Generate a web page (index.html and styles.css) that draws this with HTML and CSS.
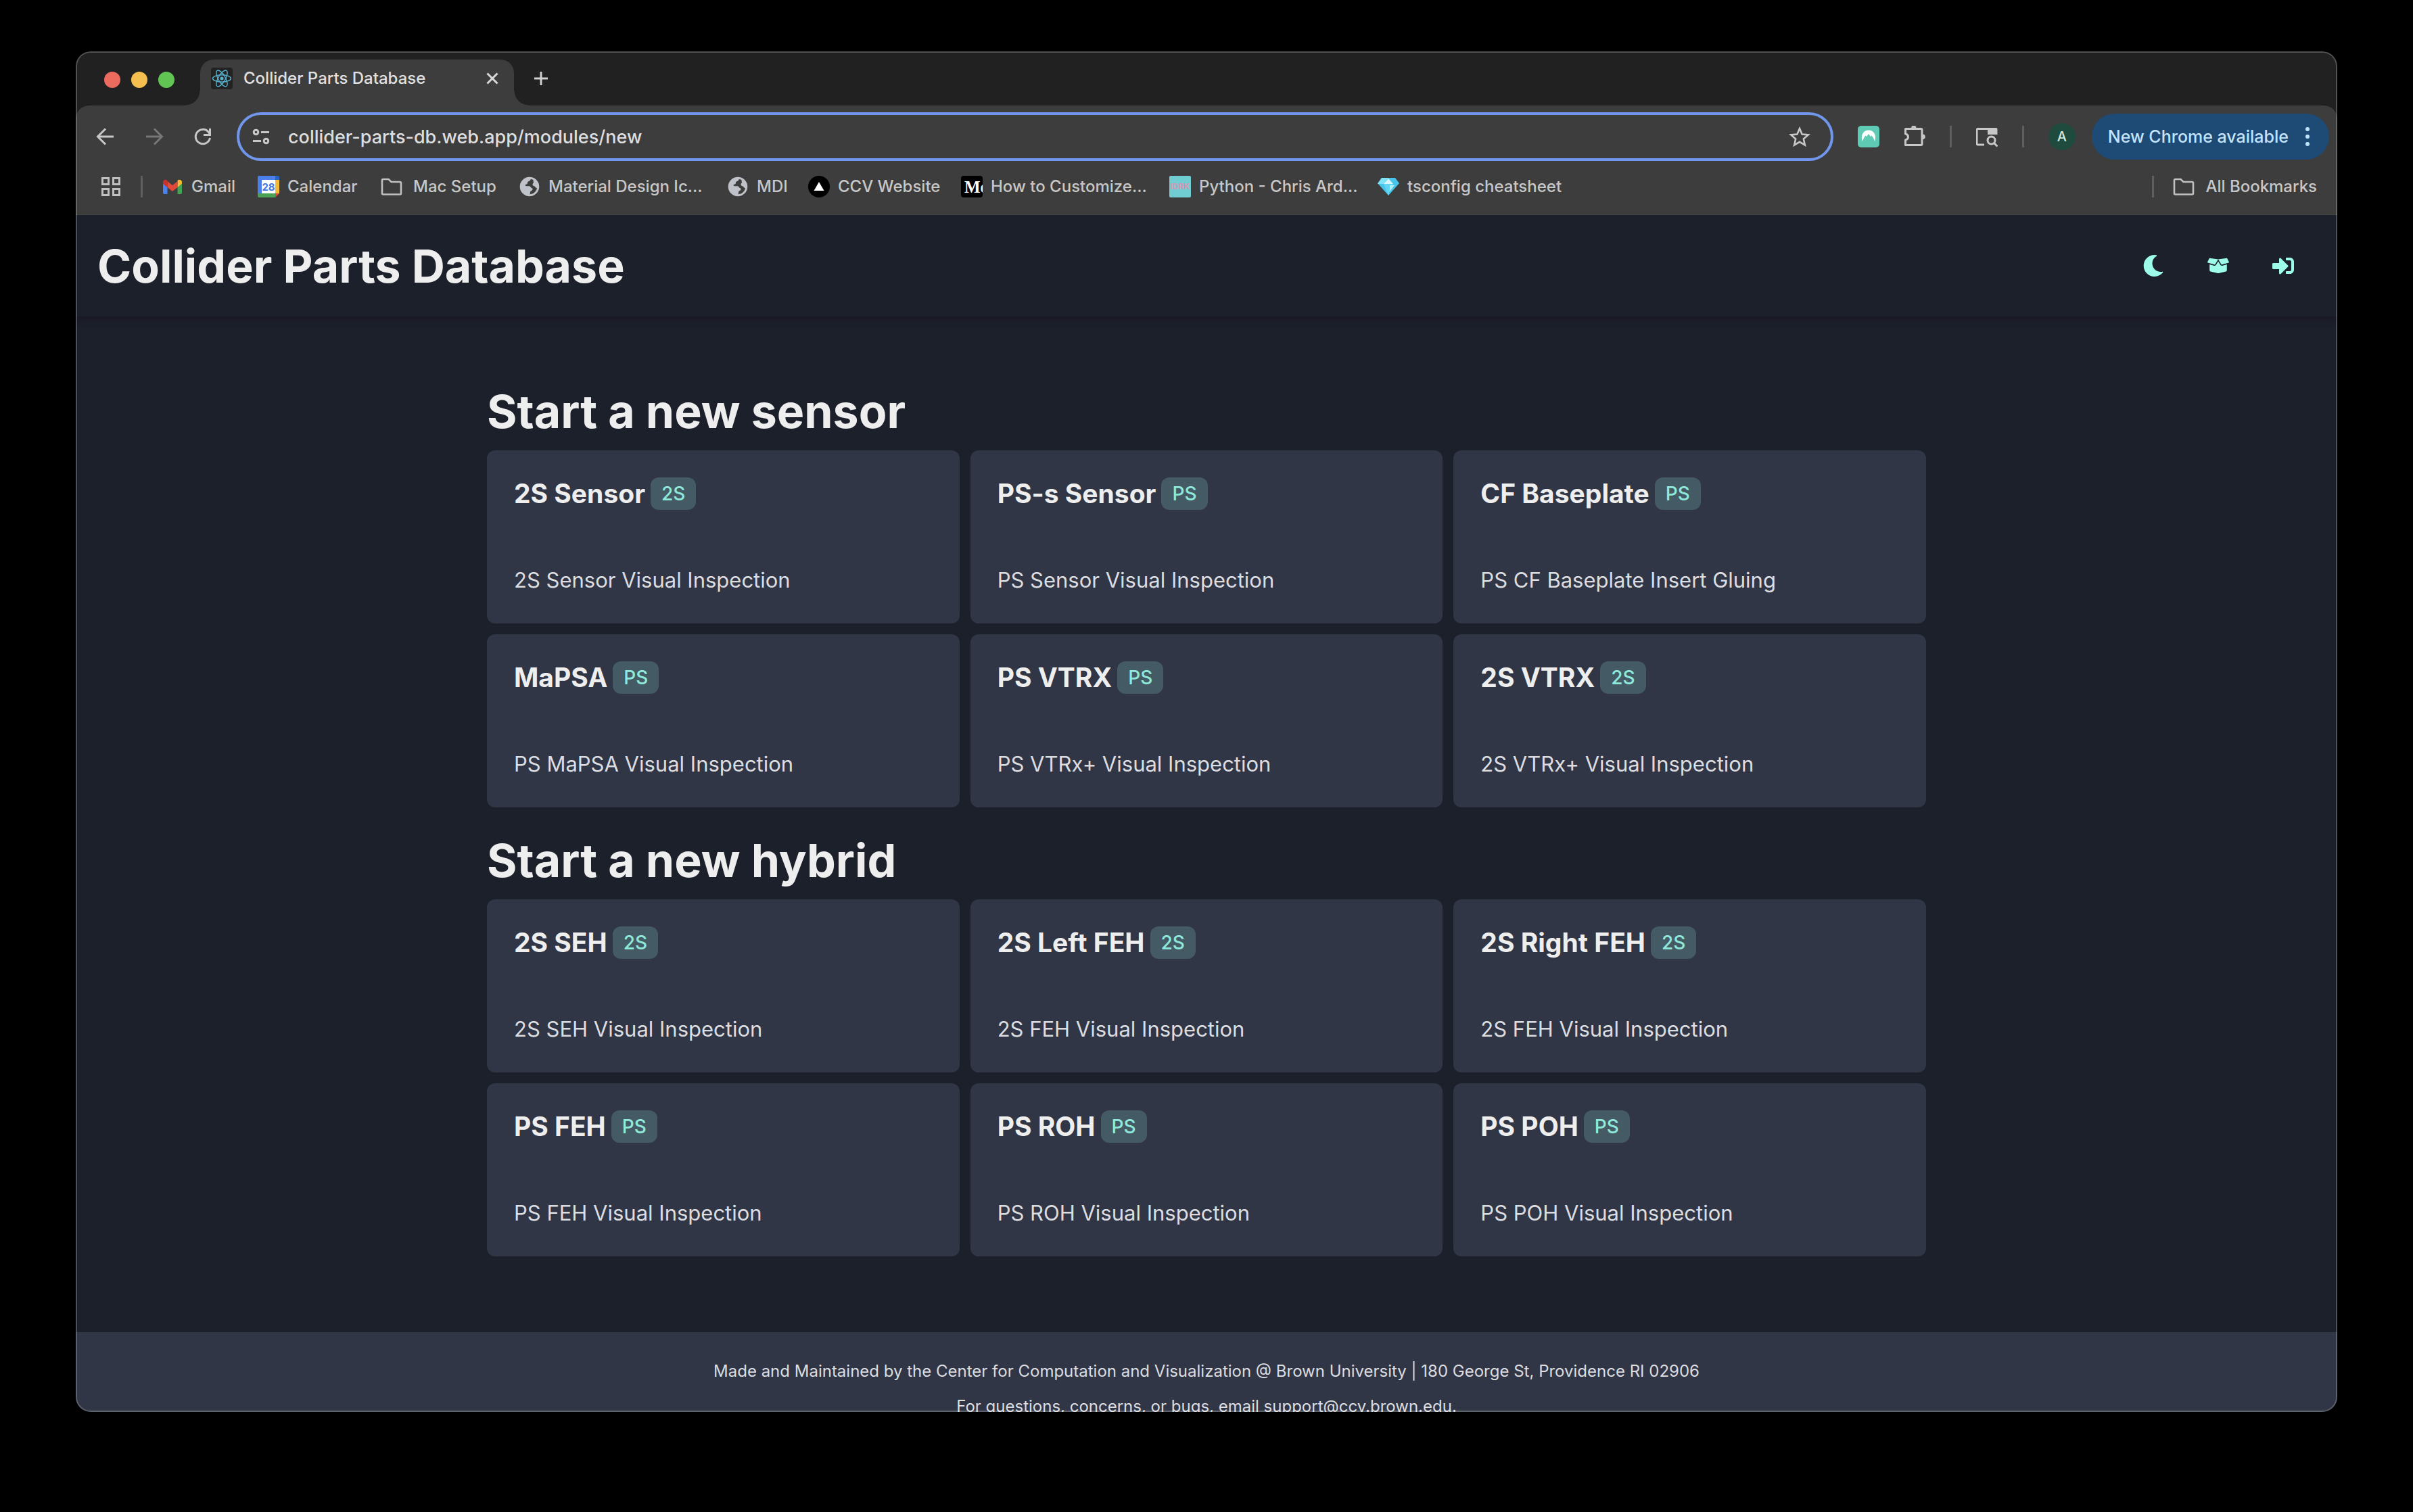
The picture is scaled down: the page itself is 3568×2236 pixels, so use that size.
FILE: index.html
```html
<!DOCTYPE html>
<html lang="en">
<head>
<meta charset="utf-8">
<meta name="viewport" content="width=device-width, initial-scale=1">
<title>Collider Parts Database</title>
<link rel="stylesheet" href="styles.css">
</head>
<body>
<div class="window">
  <div class="tab-strip">
    <div class="traffic-lights">
      <button class="light light-close" aria-label="Close window"></button>
      <button class="light light-minimize" aria-label="Minimize window"></button>
      <button class="light light-zoom" aria-label="Zoom window"></button>
    </div>
    <div class="tab">
      <svg class="icon" viewBox="0 0 32 32" aria-hidden="true">
        <rect width="32" height="32" rx="4" fill="#222222"/>
        <g fill="none" stroke="#57b3cf" stroke-width="1.4">
          <ellipse cx="16" cy="16" rx="13.5" ry="5.2"/>
          <ellipse cx="16" cy="16" rx="13.5" ry="5.2" transform="rotate(60 16 16)"/>
          <ellipse cx="16" cy="16" rx="13.5" ry="5.2" transform="rotate(120 16 16)"/>
        </g>
        <circle cx="16" cy="16" r="2.6" fill="#57b3cf"/>
      </svg>
      <span class="tab-title">Collider Parts Database</span>
      <button class="plain-button" aria-label="Close tab">
        <svg class="icon" viewBox="0 0 32 32" fill="none" stroke="#d8d8d8" stroke-width="3"><path d="M8.500 8.500l15 15M23.500 8.500l-15 15"/></svg>
      </button>
    </div>
    <button class="plain-button new-tab" aria-label="New tab">
      <svg class="icon" viewBox="0 0 32 32" fill="none" stroke="#d0d0d0" stroke-width="3"><path d="M16 6v20M6 16h20"/></svg>
    </button>
  </div>

  <div class="toolbar">
    <div class="nav-buttons">
      <button class="plain-button" aria-label="Back">
        <svg class="icon" viewBox="0 0 32 32" fill="none" stroke="#c7c7c7" stroke-width="3"><path d="M28 16H5M16 4.500L4.500 16 16 27.500"/></svg>
      </button>
      <button class="plain-button" aria-label="Forward">
        <svg class="icon" viewBox="0 0 32 32" fill="none" stroke="#777777" stroke-width="3"><path d="M4 16h23M16 4.500L27.500 16 16 27.500"/></svg>
      </button>
      <button class="plain-button" aria-label="Reload">
        <svg class="icon" viewBox="0 0 32 32" fill="none" stroke="#c7c7c7" stroke-width="3"><path d="M26.500 18A10.700 10.700 0 1 1 24 9l2 3"/><path d="M26.500 4v9.500H17"/></svg>
      </button>
    </div>
    <div class="address-bar">
      <svg class="icon" viewBox="0 0 32 32" fill="none" stroke="#c7c7c7" stroke-width="3" aria-hidden="true"><circle cx="8.500" cy="9.500" r="3.300"/><path d="M16 9.500h12M4 22.500h12"/><circle cx="23.500" cy="22.500" r="3.300"/></svg>
      <input class="address-input" type="text" aria-label="Address" value="collider-parts-db.web.app/modules/new">
      <button class="plain-button" aria-label="Bookmark this page">
        <svg class="icon" viewBox="0 0 32 32" fill="none" stroke="#c7c7c7" stroke-width="2.600"><path d="M16 4l3.600 8.600 9.200.8-7 6.100 2.100 9.100L16 23.800l-7.900 4.800 2.100-9.100-7-6.100 9.200-.8z"/></svg>
      </button>
    </div>
    <div class="extensions">
      <button class="plain-button" aria-label="NordVPN">
        <svg class="icon" viewBox="0 0 32 32"><rect width="32" height="32" rx="5" fill="#5fcbb5"/><path d="M7 23C3.500 14 8.500 6.500 16 6.500S28.500 14 25 23q-2-6-4.500-8.500L19 16l-3-4-3 4-1.500-1.500Q9 17 7 23z" fill="#fff"/></svg>
      </button>
      <button class="plain-button" aria-label="Extensions">
        <svg class="icon" viewBox="0 0 32 32"><path d="M2.500 4.500h23a1.500 1.500 0 0 1 1.500 1.500v21a1.500 1.500 0 0 1-1.500 1.500h-23V21q4-1 4-4.500t-4-4.500z" fill="none" stroke="#c7c7c7" stroke-width="3" stroke-linejoin="round"/><path d="M11 3.500a3.800 3.800 0 0 1 7.600 0zM28 12.500a3.800 3.800 0 0 1 0 7.600z" fill="#c7c7c7"/></svg>
      </button>
      <span class="divider"></span>
      <button class="plain-button" aria-label="Search tabs">
        <svg class="icon" viewBox="0 0 32 32"><path d="M12 28H2.500A1.500 1.500 0 0 1 1 26.500V6a1.500 1.500 0 0 1 1.500-1.500H26" fill="none" stroke="#c7c7c7" stroke-width="3"/><path d="M17 3h12.500a2 2 0 0 1 2 2v8H17z" fill="#c7c7c7"/><circle cx="22.500" cy="21.500" r="5.500" fill="none" stroke="#c7c7c7" stroke-width="3"/><path d="M26.500 25.500l5 5" stroke="#c7c7c7" stroke-width="3"/></svg>
      </button>
      <span class="divider"></span>
      <button class="avatar">A</button>
    </div>
    <button class="update-chip">New Chrome available
      <svg class="chip-dots" viewBox="0 0 8 32" fill="#bfe3fb" aria-hidden="true"><circle cx="4" cy="5" r="3"/><circle cx="4" cy="16" r="3"/><circle cx="4" cy="27" r="3"/></svg>
    </button>
  </div>

  <nav class="bookmarks" aria-label="Bookmarks">
    <button class="plain-button" aria-label="Apps">
      <svg class="icon" viewBox="0 0 32 32" fill="none" stroke="#c0c0c0" stroke-width="3"><path d="M3.500 3.500h9v9h-9zM19.500 3.500h9v9h-9zM3.500 19.500h9v9h-9zM19.500 19.500h9v9h-9z"/></svg>
    </button>
    <span class="divider"></span>
    <div class="bookmark-list">
      <a class="bookmark" href="#">
        <svg class="icon" viewBox="0 0 32 32" aria-hidden="true"><path d="M2 8l6.500 5v14H4a2 2 0 0 1-2-2z" fill="#4a83ee"/><path d="M23.500 13L30 8v17a2 2 0 0 1-2 2h-4.500z" fill="#41a454"/><path d="M23.500 7c3-2.500 6.500-.5 6.500 2.500v2L23.500 17z" fill="#f3bb31"/><path d="M8.500 17V8l7.500 6 7.500-6v9L16 23z" fill="#e1493b"/><path d="M2 9.500C2 6.500 5.500 4.500 8.500 7v10L2 12z" fill="#c5352b"/></svg>
        <span>Gmail</span>
      </a>
      <a class="bookmark" href="#">
        <svg class="icon" viewBox="0 0 32 32" aria-hidden="true"><path d="M0 2a2 2 0 0 1 2-2h24v6H6v20H0z" fill="#4a80e8"/><path d="M26 0h4a2 2 0 0 1 2 2v4h-6z" fill="#2b62c6"/><path d="M26 6h6v20h-6z" fill="#f2bb37"/><path d="M0 26h26v6H2a2 2 0 0 1-2-2z" fill="#4ba256"/><path d="M26 26h6l-6 6z" fill="#dc4a3b"/><path d="M6 6h20v20H6z" fill="#fff"/><text class="calendar-day" x="16" y="22" text-anchor="middle">28</text></svg>
        <span>Calendar</span>
      </a>
      <a class="bookmark bookmark-folder" href="#">
        <svg class="icon" viewBox="0 0 32 32" aria-hidden="true"><path d="M2 26V6.500a1.500 1.500 0 0 1 1.500-1.500h8l4 4h13A1.500 1.500 0 0 1 30 10.500V26a1.500 1.500 0 0 1-1.500 1.500h-25A1.500 1.500 0 0 1 2 26z" fill="none" stroke="#c0c0c0" stroke-width="2.600"/></svg>
        <span>Mac Setup</span>
      </a>
      <a class="bookmark" href="#">
        <svg class="icon" viewBox="0 0 32 32" aria-hidden="true"><circle cx="16" cy="16" r="12.800" fill="#3d3d3d" stroke="#bfc3c9" stroke-width="3"/><path d="M3 14C4 7 10 3 17 3.500c2 2.500-1 4-3 5s0 3.500-2.500 4S9 14 10.500 15s6-1 7 1.500 3.500 1 3 3.500-3.500 2-3.500 4.500-1 4-3 4C8 27.500 3 22 3 14z" fill="#bfc3c9"/><path d="M22 6c4 2 7 6 6.500 11-2 2.500-3 .5-4.500-1s-3.500-1-3.500-3 2-2.500 1.500-4-1-2 0-3z" fill="#bfc3c9"/></svg>
        <span>Material Design Ic...</span>
      </a>
      <a class="bookmark" href="#">
        <svg class="icon" viewBox="0 0 32 32" aria-hidden="true"><circle cx="16" cy="16" r="12.800" fill="#3d3d3d" stroke="#bfc3c9" stroke-width="3"/><path d="M3 14C4 7 10 3 17 3.500c2 2.500-1 4-3 5s0 3.500-2.500 4S9 14 10.500 15s6-1 7 1.500 3.500 1 3 3.500-3.500 2-3.500 4.500-1 4-3 4C8 27.500 3 22 3 14z" fill="#bfc3c9"/><path d="M22 6c4 2 7 6 6.500 11-2 2.500-3 .5-4.500-1s-3.500-1-3.500-3 2-2.500 1.500-4-1-2 0-3z" fill="#bfc3c9"/></svg>
        <span>MDI</span>
      </a>
      <a class="bookmark" href="#">
        <svg class="icon" viewBox="0 0 32 32" aria-hidden="true"><circle cx="16" cy="16" r="16" fill="#000"/><path d="M16 9l7.500 13h-15z" fill="#fff"/></svg>
        <span>CCV Website</span>
      </a>
      <a class="bookmark" href="#">
        <svg class="icon" viewBox="0 0 32 32" aria-hidden="true"><rect width="32" height="32" rx="4" fill="#000"/><text class="medium-mark" x="5" y="25">Me</text></svg>
        <span>How to Customize...</span>
      </a>
      <a class="bookmark" href="#">
        <svg class="icon" viewBox="0 0 32 32" aria-hidden="true"><rect width="32" height="32" rx="2" fill="#70ced2"/><text class="python-mark" x="16" y="20" text-anchor="middle">IDRK</text></svg>
        <span>Python - Chris Ard...</span>
      </a>
      <a class="bookmark" href="#">
        <svg class="icon" viewBox="0 0 32 32" aria-hidden="true"><path d="M6 3h20l6 8-16 18L0 11z" fill="#48c3ea"/><path d="M6 3h10L9 12H0z" fill="#7fe2f5"/><path d="M16 4l7 8H9z" fill="#d6f7fc"/><path d="M9 12h14l-7 17z" fill="#62d5f2"/><path d="M18 14h7l-7 9z" fill="#b5effa"/></svg>
        <span>tsconfig cheatsheet</span>
      </a>
    </div>
    <span class="divider"></span>
    <a class="bookmark bookmark-folder all-bookmarks" href="#">
      <svg class="icon" viewBox="0 0 32 32" aria-hidden="true"><path d="M2 26V6.500a1.500 1.500 0 0 1 1.500-1.500h8l4 4h13A1.500 1.500 0 0 1 30 10.500V26a1.500 1.500 0 0 1-1.500 1.500h-25A1.500 1.500 0 0 1 2 26z" fill="none" stroke="#c0c0c0" stroke-width="2.600"/></svg>
      <span>All Bookmarks</span>
    </a>
  </nav>

  <div class="page">
    <header class="site-header">
      <h1 class="heading">Collider Parts Database</h1>
      <div class="header-actions">
        <button class="icon-button" aria-label="Toggle color mode">
          <svg class="icon" viewBox="0 0 512 512" fill="currentColor"><path d="M283.211 512c78.962 0 151.079-35.925 198.857-94.792 7.068-8.708-.639-21.430-11.562-19.350-124.203 23.654-238.262-71.576-238.262-196.954 0-72.222 38.662-138.635 101.498-174.394 9.686-5.512 7.250-20.197-3.756-22.230A258.156 258.156 0 0 0 283.211 0c-141.309 0-256 114.511-256 256 0 141.309 114.511 256 256 256z"/></svg>
        </button>
        <button class="icon-button" aria-label="Parts">
          <svg class="icon" viewBox="0 0 640 512" fill="currentColor"><path d="M425.700 256c-16.900 0-32.800-9-41.400-23.400L320 126l-64.200 106.600c-8.700 14.500-24.600 23.500-41.500 23.500-4.500 0-9-.6-13.300-1.900L64 215v178c0 14.700 10 27.500 24.200 31l216.200 54.100c10.200 2.500 20.900 2.500 31 0L551.800 424c14.200-3.600 24.200-16.400 24.200-31V215l-137 39.100c-4.300 1.300-8.800 1.900-13.300 1.900zm212.600-112.200L586.800 41c-3.100-6.200-9.800-9.800-16.700-8.900L320 64l91.700 152.100c3.800 6.300 11.400 9.300 18.500 7.300l197.900-56.500c9.900-2.900 14.700-13.900 10.200-23.100zM53.200 41L1.700 143.800c-4.600 9.200.3 20.200 10.100 23l197.900 56.500c7.100 2 14.700-1 18.500-7.300L320 64 69.800 32.100c-6.900-.8-13.500 2.700-16.600 8.900z"/></svg>
        </button>
        <button class="icon-button" aria-label="Sign in">
          <svg class="icon" viewBox="0 0 512 512" fill="currentColor"><path d="M416 448h-84c-6.600 0-12-5.400-12-12v-40c0-6.600 5.400-12 12-12h84c17.700 0 32-14.300 32-32V160c0-17.700-14.300-32-32-32h-84c-6.600 0-12-5.400-12-12V76c0-6.600 5.400-12 12-12h84c53 0 96 43 96 96v192c0 53-43 96-96 96zm-47-201L201 79c-15-15-41-4.500-41 17v96H24c-13.300 0-24 10.700-24 24v96c0 13.300 10.700 24 24 24h136v96c0 21.500 26 32 41 17l168-168c9.300-9.400 9.300-24.600 0-34z"/></svg>
        </button>
      </div>
    </header>

    <main class="content">
      <section class="part-section">
        <h2 class="heading">Start a new sensor</h2>
        <div class="card-grid">
          <a class="card" href="#"><h3 class="card-title">2S Sensor <span class="badge">2S</span></h3><p class="card-text">2S Sensor Visual Inspection</p></a>
          <a class="card" href="#"><h3 class="card-title">PS-s Sensor <span class="badge">PS</span></h3><p class="card-text">PS Sensor Visual Inspection</p></a>
          <a class="card" href="#"><h3 class="card-title">CF Baseplate <span class="badge">PS</span></h3><p class="card-text">PS CF Baseplate Insert Gluing</p></a>
          <a class="card" href="#"><h3 class="card-title">MaPSA <span class="badge">PS</span></h3><p class="card-text">PS MaPSA Visual Inspection</p></a>
          <a class="card" href="#"><h3 class="card-title">PS VTRX <span class="badge">PS</span></h3><p class="card-text">PS VTRx+ Visual Inspection</p></a>
          <a class="card" href="#"><h3 class="card-title">2S VTRX <span class="badge">2S</span></h3><p class="card-text">2S VTRx+ Visual Inspection</p></a>
        </div>
      </section>
      <section class="part-section">
        <h2 class="heading">Start a new hybrid</h2>
        <div class="card-grid">
          <a class="card" href="#"><h3 class="card-title">2S SEH <span class="badge">2S</span></h3><p class="card-text">2S SEH Visual Inspection</p></a>
          <a class="card" href="#"><h3 class="card-title">2S Left FEH <span class="badge">2S</span></h3><p class="card-text">2S FEH Visual Inspection</p></a>
          <a class="card" href="#"><h3 class="card-title">2S Right FEH <span class="badge">2S</span></h3><p class="card-text">2S FEH Visual Inspection</p></a>
          <a class="card" href="#"><h3 class="card-title">PS FEH <span class="badge">PS</span></h3><p class="card-text">PS FEH Visual Inspection</p></a>
          <a class="card" href="#"><h3 class="card-title">PS ROH <span class="badge">PS</span></h3><p class="card-text">PS ROH Visual Inspection</p></a>
          <a class="card" href="#"><h3 class="card-title">PS POH <span class="badge">PS</span></h3><p class="card-text">PS POH Visual Inspection</p></a>
        </div>
      </section>
    </main>

    <footer class="site-footer">
      <p>Made and Maintained by the Center for Computation and Visualization @ Brown University | 180 George St, Providence RI 02906</p>
      <p>For questions, concerns, or bugs, email support@ccv.brown.edu.</p>
    </footer>
  </div>
</div>
</body>
</html>
```
FILE: styles.css
```css
*,
*::before,
*::after {
  box-sizing: border-box;
}

body {
  display: flex;
  height: 100vh;
  margin: 0;
  padding: 76px 112px 148px;
  background: #000000;
  color: #eeeeee;
  font-family: Inter, "Liberation Sans", sans-serif;
}

h1, h2, h3, p {
  margin: 0;
}

a {
  color: inherit;
  text-decoration: none;
}

button {
  padding: 0;
  border: 0;
  background: none;
  color: inherit;
  font: inherit;
}

.window {
  position: relative;
  display: flex;
  flex: 1;
  flex-direction: column;
  min-width: 0;
  overflow: hidden;
  border-radius: 22px;
  background: #212121;
}

/* Hairline edge drawn above everything inside the window */
.window::after {
  content: "";
  position: absolute;
  inset: 0;
  border: 2px solid rgba(255, 255, 255, 0.22);
  border-radius: 22px;
  pointer-events: none;
}

.icon {
  display: block;
  flex: none;
  width: 32px;
  height: 32px;
}

.plain-button {
  flex: none;
}

.divider {
  flex: none;
  width: 3px;
  height: 32px;
  background: #5f5f5f;
}

/* Tab strip */

.tab-strip {
  display: flex;
  flex: none;
  align-items: flex-end;
  height: 80px;
  padding-left: 42px;
  background: #212121;
}

.traffic-lights {
  display: flex;
  gap: 16px;
  align-items: center;
  width: 142px;
  height: 76px;
}

.light {
  width: 24px;
  height: 24px;
  border-radius: 50%;
}

.light-close { background: #ed6a5e; }
.light-minimize { background: #f5bf4f; }
.light-zoom { background: #61c554; }

.tab {
  position: relative;
  display: flex;
  gap: 16px;
  align-items: center;
  width: 464px;
  height: 68px;
  padding: 0 16px 12px;
  border-radius: 20px 20px 0 0;
  background: #3d3d3d;
}

.tab::before,
.tab::after {
  content: "";
  position: absolute;
  bottom: 0;
  width: 22px;
  height: 22px;
}

.tab::before {
  right: 100%;
  background: radial-gradient(circle at 0 0, transparent 21px, #3d3d3d 22px);
}

.tab::after {
  left: 100%;
  background: radial-gradient(circle at 100% 0, transparent 21px, #3d3d3d 22px);
}

.tab-title {
  flex: 1;
  color: #e0e0e0;
  font-size: 24px;
  font-weight: 500;
  line-height: 32px;
}

.new-tab {
  margin: 0 24px 24px;
}

/* Toolbar */

.toolbar {
  display: flex;
  flex: none;
  align-items: center;
  height: 92px;
  padding: 0 12px 0 28px;
  border-radius: 20px 20px 0 0;
  background: #3d3d3d;
}

.nav-buttons {
  display: flex;
  gap: 40px;
  width: 210px;
}

.address-bar {
  display: flex;
  flex: 1;
  gap: 24px;
  align-items: center;
  min-width: 0;
  height: 72px;
  padding: 0 30px 0 16px;
  border: 4px solid #7097ec;
  border-radius: 36px;
}

.address-input {
  flex: 1;
  min-width: 0;
  padding: 0;
  border: 0;
  outline: 0;
  background: none;
  color: #dedede;
  font-family: inherit;
  font-size: 27px;
  font-weight: 500;
}

.extensions {
  display: flex;
  gap: 36px;
  align-items: center;
  padding: 0 24px 0 36px;
}

.avatar {
  width: 40px;
  height: 40px;
  border-radius: 50%;
  background: #1f4b3f;
  color: #d5e6df;
  font-size: 20px;
  font-weight: 500;
}

.update-chip {
  display: flex;
  flex: none;
  gap: 24px;
  align-items: center;
  height: 68px;
  padding: 0 28px 0 24px;
  border-radius: 34px;
  background: #1e4a76;
  color: #c5e4fa;
  font-size: 25px;
  font-weight: 500;
}

.chip-dots {
  width: 8px;
  height: 32px;
}

/* Bookmarks bar */

.bookmarks {
  display: flex;
  flex: none;
  align-items: center;
  height: 70px;
  padding: 0 30px 12px 36px;
  border-bottom: 2px solid #474747;
  background: #3d3d3d;
  color: #c7c7c7;
  font-size: 24px;
  font-weight: 500;
  line-height: 32px;
}

.bookmarks > .divider {
  margin: 0 28px;
}

.bookmark-list {
  display: grid;
  flex: 1;
  grid-template-columns: 142px 182px 204px 308px 120px 226px 308px 308px auto;
}

.bookmark {
  display: flex;
  gap: 12px;
  align-items: center;
  white-space: nowrap;
}

.bookmark-folder {
  gap: 16px;
}

.calendar-day {
  fill: #3f78e0;
  font-size: 15px;
  font-weight: 700;
}

.medium-mark {
  fill: #ffffff;
  font-family: "Liberation Serif", serif;
  font-size: 25px;
  font-weight: 700;
}

.python-mark {
  fill: #d893b4;
  font-size: 12px;
  font-weight: 700;
}

/* Page */

.page {
  display: flex;
  flex: 1;
  flex-direction: column;
  min-height: 0;
  background: #1c202b;
}

.heading {
  font-size: 68px;
  font-weight: 700;
  line-height: 88px;
}

.site-header {
  display: flex;
  flex: none;
  align-items: center;
  justify-content: space-between;
  height: 150px;
  padding: 0 40px 0 32px;
  box-shadow: 0 4px 8px rgba(24, 20, 32, 0.7);
}

.header-actions {
  display: flex;
  gap: 16px;
}

.icon-button {
  display: grid;
  place-items: center;
  width: 80px;
  height: 80px;
  border-radius: 12px;
  color: #9dfbe9;
}

.content {
  display: flex;
  flex: none;
  flex-direction: column;
  gap: 34px;
  width: calc(100% - 80px);
  max-width: 2128px;
  margin: 0 auto;
  padding: 96px 0 112px;
}

.part-section {
  display: flex;
  flex-direction: column;
  gap: 14px;
}

.card-grid {
  display: grid;
  grid-template-columns: repeat(3, 1fr);
  gap: 16px;
}

.card {
  display: flex;
  flex-direction: column;
  gap: 80px;
  padding: 40px;
  border-radius: 12px;
  background: #303645;
}

.card-title {
  display: flex;
  gap: 8px;
  align-items: center;
  font-size: 39px;
  font-weight: 700;
  line-height: 48px;
}

.badge {
  padding: 0 16px;
  border-radius: 12px;
  background: #445a64;
  color: #8ee9da;
  font-size: 28px;
  font-weight: 500;
}

.card-text {
  color: #dcdde0;
  font-size: 31px;
  line-height: 48px;
}

.site-footer {
  flex: none;
  padding-top: 32px;
  background: #303645;
  color: #dcdde0;
  font-size: 24px;
  line-height: 52px;
  text-align: center;
}
```
